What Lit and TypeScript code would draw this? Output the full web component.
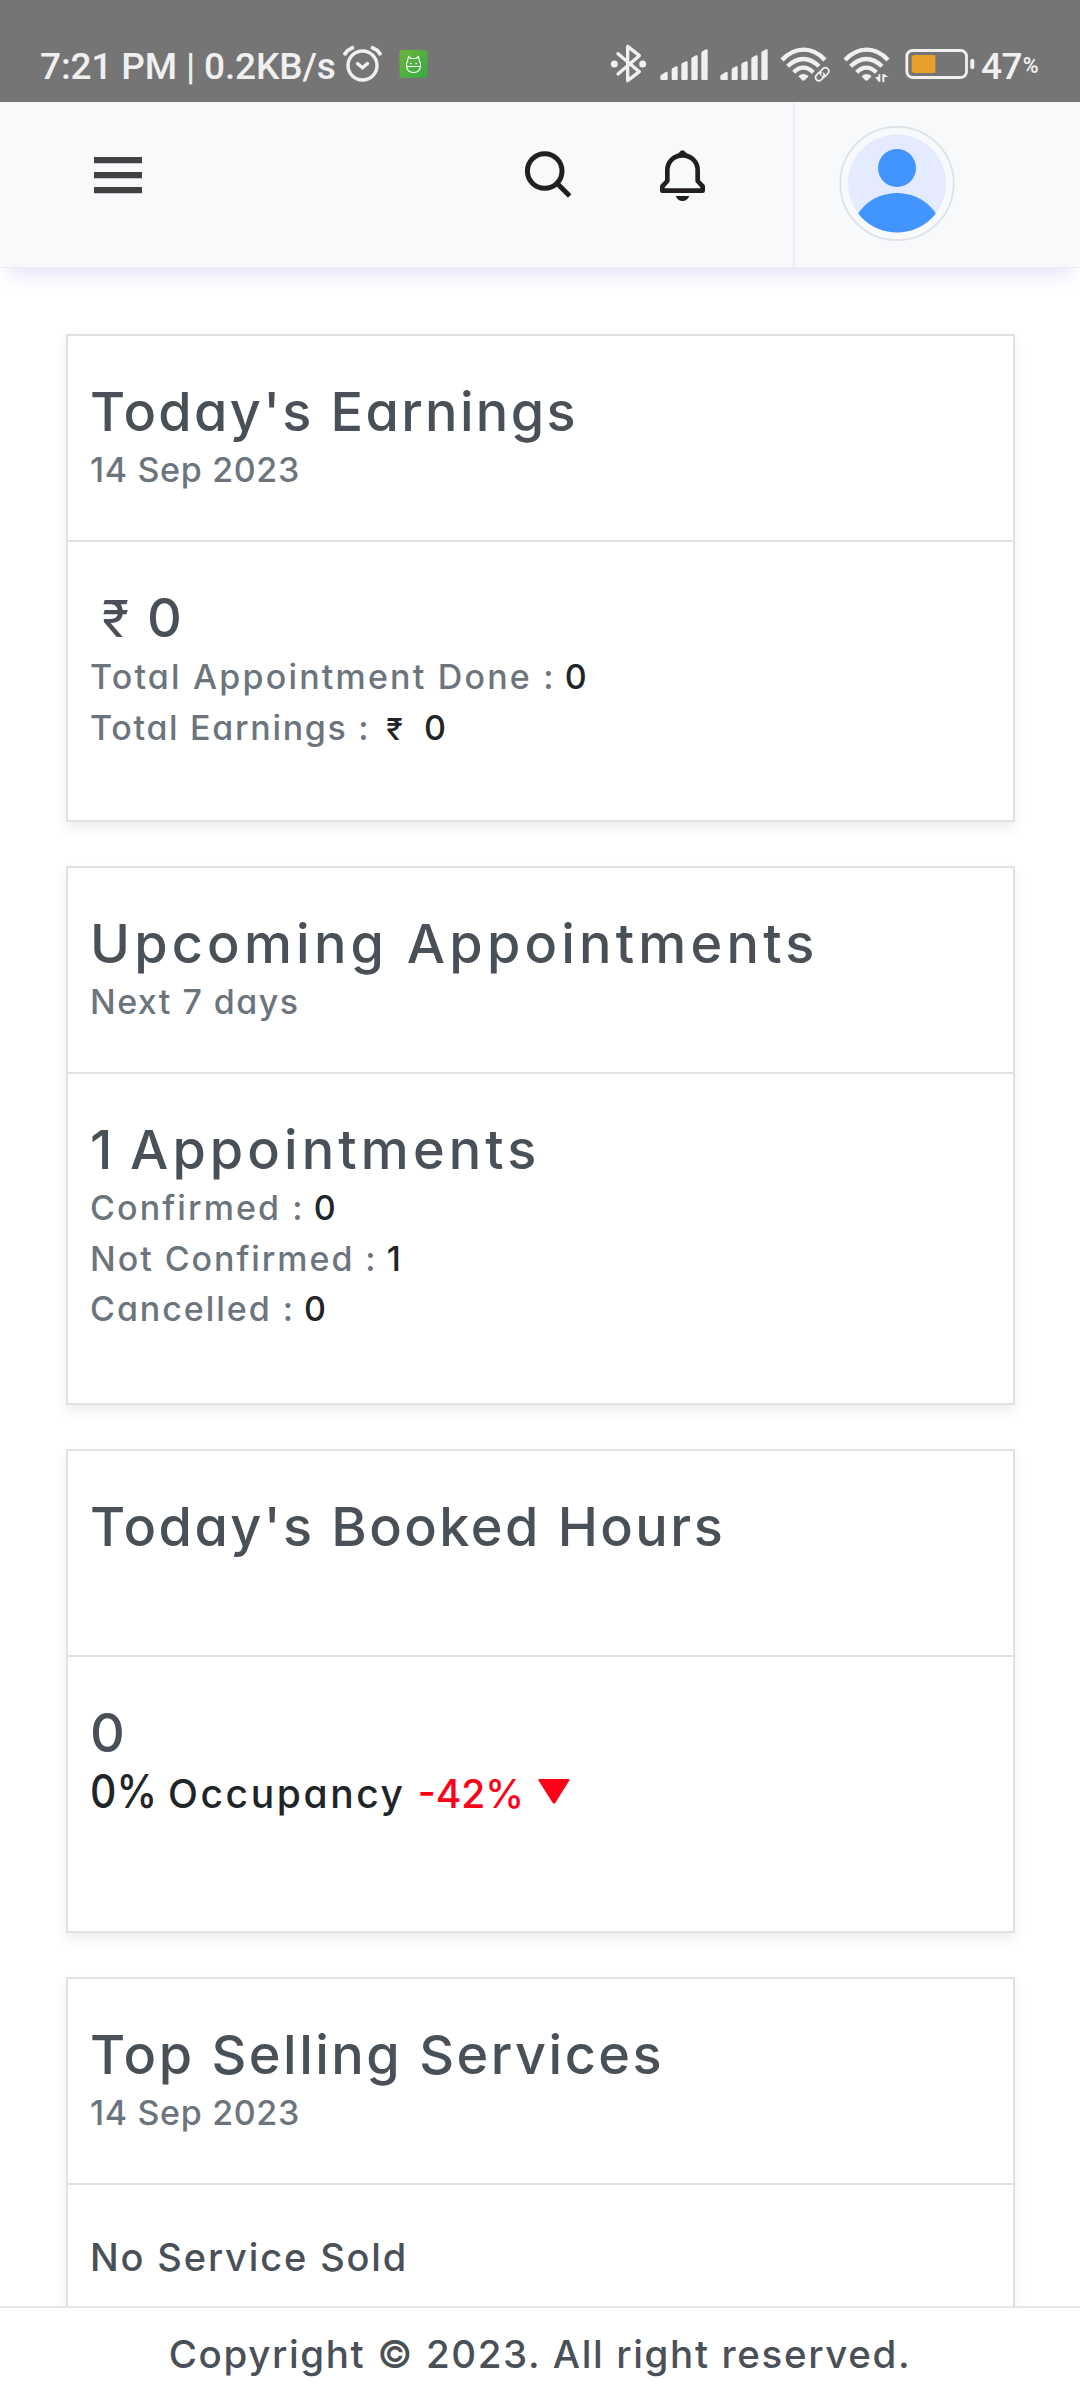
import { LitElement, html, svg, css, nothing } from "lit";
import { customElement, property } from "lit/decorators.js";
import { styleMap } from "lit/directives/style-map.js";

interface Run {
  text: string;
  kind: string;
  track: number;
}

interface Card {
  title: Run;
  note?: Run;
  size: string;
  rows: { kind: string; runs: Run[] }[];
}

const run = (text: string, kind = "", track = 0): Run => ({ text, kind, track });

const CARDS: Card[] = [
  {
    title: run("Today's Earnings", "", 2.35),
    note: run("14 Sep 2023", "", 0.66),
    size: "earnings",
    rows: [
      { kind: "big", runs: [run("₹", "rupee-big"), run("0")] },
      { kind: "line", runs: [run("Total Appointment Done :", "", 2.18), run("0", "value")] },
      { kind: "line", runs: [run("Total Earnings :", "", 1.69), run("₹", "rupee"), run("0", "value amount")] },
    ],
  },
  {
    title: run("Upcoming Appointments", "", 4.2),
    note: run("Next 7 days", "", 1.45),
    size: "upcoming",
    rows: [
      { kind: "big", runs: [run("1 Appointments", "tight", 4.1)] },
      { kind: "line", runs: [run("Confirmed :", "", 2.1), run("0", "value")] },
      { kind: "line", runs: [run("Not Confirmed :", "", 1.94), run("1", "value")] },
      { kind: "line", runs: [run("Cancelled :", "", 1.96), run("0", "value")] },
    ],
  },
  {
    title: run("Today's Booked Hours", "", 2.45),
    size: "hours",
    rows: [
      { kind: "big", runs: [run("0")] },
      { kind: "rate", runs: [run("0%", "percent"), run("Occupancy", "occupancy", 2.6), run("-42%", "drop"), run("", "arrow")] },
    ],
  },
  {
    title: run("Top Selling Services", "", 2.5),
    note: run("14 Sep 2023", "", 0.66),
    size: "services",
    rows: [{ kind: "plain", runs: [run("No Service Sold", "", 1.85)] }],
  },
];

const drawRun = (r: Run) =>
  r.kind === "arrow"
    ? html`<svg class="arrow" width="32" height="25" viewBox="0 0 32 25"><path d="M.5 1.5Q0 0 1.5 0h29Q32 0 31.3 1.5L17.2 24q-1.2 1.5-2.4 0z" fill="#ff0019" /></svg>`
    : html`<span class=${r.kind} style=${styleMap({ letterSpacing: `${r.track}px` })}>${r.text}</span>`;

@customElement("status-bar")
class StatusBar extends LitElement {
  static styles = css`
    :host {
      display: flex;
      box-sizing: border-box;
      height: 102px;
      padding: 30px 0 0 40px;
      background: #757575;
      color: #f0f0f0;
      font: 500 37px/70px Roboto, "Liberation Sans", sans-serif;
      white-space: nowrap;
    }
    svg { display: block; flex: none; fill: #f0f0f0; }
    .time { width: 302px; margin-top: 1.5px; letter-spacing: -0.15px; }
    .pct { font-size: 21.5px; margin: 1px 0 0 1px; font-weight: 600; }
    .level { margin: 1.5px 0 0 6px; letter-spacing: -0.6px; }
    .app { margin-left: 17px; }
    .bt { margin-left: 182px; }
    .sig { margin-left: 13px; }
    .sig2 { margin-left: 11px; }
    .wifi { margin-left: 11px; }
    .wifi2 { margin-left: 12px; }
    .bat { margin-left: 11px; }
  `;

  private signal(cls: string) {
    return html`<svg class=${cls} width="49" height="70" viewBox="177 0 147 210">
      <path d="M178 147v-8q0-2 2-4l14-9q6-3 6 2v22h-18q-4 0-4-3zM212 119q0-3 3-5l10-5q5-2 5 3v35q0 3-3 3h-12q-3 0-3-3zM241 104q0-3 3-5l11-5q5-2 5 3v50q0 3-3 3h-13q-3 0-3-3zM271 87q0-3 3-5l11-6q5-2 5 3v68q0 3-3 3h-13q-3 0-3-3zM301 69q0-3 3-5l12-6q4-2 4 3v86q0 3-3 3h-13q-3 0-3-3z" />
    </svg>`;
  }

  private waves(badge: unknown, cls: string) {
    return html`<svg class=${cls} width="51" height="70" viewBox="541 0 153 210">
      <g fill="none" stroke="#f0f0f0" stroke-width="13">
        <path d="M547 90Q576 59 612 59T676 90" />
        <path d="M564 109Q586 87 611 87T658 109" />
        <path d="M582 127Q596 113 611 113T641 127" />
      </g>
      <path d="M596 139q15-14 31 0l-11 11q-5 4-9 0z" />
      ${badge}
    </svg>`;
  }

  render() {
    const link = svg`<g fill="none" stroke="#757575" stroke-width="12"><path d="M652 150l32-34" /></g>
      <g fill="none" stroke="#f0f0f0" stroke-width="5" stroke-linecap="round">
        <path d="M663 134q-5-6 1-12l6-6q7-6 14 0t1 14l-7 8q-5 4-10 1" />
        <path d="M672 130q5 7-1 13l-6 6q-7 7-14 1t-1-14l6-7q4-4 9-2" />
      </g>`;
    const arrows = svg`<path d="M636 131h12v2h6v26h-18z" fill="#757575" />
      <path d="M647 133h6v23q-3 1-5-1l-11-14h10zM659 157h6v-16h12l-13-9q-3-1-5 1z" />`;
    return html`
      <span class="time">7:21 PM | 0.2KB/s</span>
      <svg class="alarm" width="40" height="70" viewBox="0 0 40 70">
        <g fill="none" stroke="#f0f0f0" stroke-linecap="round">
          <circle cx="20.500" cy="35.500" r="14.500" stroke-width="3.400" />
          <path d="M15.500 33.500l5 4.200 5-4.200" stroke-width="3.400" />
          <path d="M3 23.800Q6 19.500 10.500 17.800M38 23.800Q35 19.500 30.500 17.800" stroke-width="3.800" />
        </g>
      </svg>
      <svg class="app" width="29" height="70" viewBox="0 0 29 70">
        <defs><linearGradient id="g" x1="0" y1="0" x2="1" y2="1"><stop offset="0" stop-color="#6bb43c" /><stop offset="1" stop-color="#35aa43" /></linearGradient></defs>
        <rect x="0.500" y="20" width="28" height="28" rx="2.500" fill="url(#g)" />
        <g fill="none" stroke="#fff" stroke-width="1.100">
          <path d="M8.500 31.500l1-5 2.500 2h5l2.500-2 1 5q1 1 1 3.500 0 7.500-7 7.500t-7-7.500q0-2.500 1-3.500zM7.500 36.500h14" />
          <path d="M11 33.500h1.500M16.500 33.500h1.500" stroke-width="1.500" />
        </g>
      </svg>
      <svg class="bt" width="37" height="70" viewBox="29 0 111 210">
        <path d="M53 71l64 54-35 27V49l35 28-64 55" fill="none" stroke="#f0f0f0" stroke-width="10" stroke-linejoin="round" stroke-linecap="round" />
        <circle cx="42" cy="102" r="10.500" /><circle cx="127" cy="102" r="10.500" />
      </svg>
      ${this.signal("sig")} ${this.signal("sig2")} ${this.waves(link, "wifi")} ${this.waves(arrows, "wifi2")}
      <svg class="bat" width="70" height="70" viewBox="197 0 210 210">
        <rect x="202.500" y="61.500" width="179" height="81" rx="17" fill="none" stroke="#f0f0f0" stroke-width="8.500" />
        <rect x="393" y="87" width="12" height="30" rx="5" />
        <path d="M225 75h63v54h-63q-8 0-8-8V83q0-8 8-8z" fill="#e8a02c" />
      </svg>
      <span class="level">47</span><span class="pct">%</span>
    `;
  }
}

@customElement("top-bar")
class TopBar extends LitElement {
  static styles = css`
    :host {
      display: flex;
      box-sizing: border-box;
      height: 166px;
      background: #f8f9fb;
      border-bottom: 1px solid #ececf4;
      box-shadow: 0 15px 18px -9px rgba(100, 90, 225, 0.18);
    }
    svg { display: block; flex: none; }
    .menu { margin: 54px 0 0 94px; }
    .search { margin: 48px 0 0 382px; }
    .bell { margin: 46px 0 0 84px; }
    .user {
      margin-left: auto;
      width: 287px;
      box-sizing: border-box;
      border-left: 2px solid #eeeff2;
      padding: 24px 0 0 44px;
    }
  `;
  render() {
    return html`
      <svg class="menu" width="48" height="39" viewBox="0 0 48 39" fill="#3f4143">
        <path d="M0 1h48v6.300H0zM0 16h48v6.300H0zM0 31h48v6.300H0z" />
      </svg>
      <svg class="search" width="50" height="50" viewBox="0 0 50 50" fill="none" stroke="#231f20" stroke-width="5">
        <circle cx="20.700" cy="21" r="17.300" /><path d="M33.200 33.500l12.500 12.500" />
      </svg>
      <svg class="bell" width="49.330" height="54.670" viewBox="444 130 148 164" fill="#231f20">
        <path d="M517.500 152c-26 0-45.500 19-45.500 45v32l-15 16v13h121v-13l-15-16v-32c0-26-19.500-45-45.500-45z" fill="none" stroke="#231f20" stroke-width="14" stroke-linejoin="round" />
        <path d="M501 149q5-1 7-6 9-13 19 0 2 5 7 6v8h-33zM497 274h41q-6 15-20.500 15T497 274z" />
      </svg>
      <div class="user">
        <svg width="116" height="116" viewBox="0 0 116 116">
          <defs><clipPath id="c"><circle cx="58" cy="57.500" r="49" /></clipPath></defs>
          <circle cx="58" cy="57.500" r="56.700" fill="none" stroke="#dee2e6" stroke-width="1.800" />
          <g clip-path="url(#c)">
            <rect width="116" height="116" fill="#e4ebff" />
            <circle cx="58" cy="42" r="19" fill="#4294ff" />
            <circle cx="58" cy="114.500" r="47.500" fill="#4294ff" />
          </g>
        </svg>
      </div>
    `;
  }
}

@customElement("stat-card")
class StatCard extends LitElement {
  @property({ attribute: false }) card!: Card;
  static styles = css`
    :host { display: block; flex: none; }
    .card {
      box-sizing: border-box;
      border: 2px solid #dee2e6;
      background: #fff;
      box-shadow: 0 6px 12px rgba(0, 0, 0, 0.075);
      white-space: nowrap;
      font-weight: 500;
    }
    .earnings { height: 488px; }
    .upcoming { height: 539px; }
    .hours { height: 484px; }
    .services { height: 484px; }
    .head {
      box-sizing: border-box;
      height: 206px;
      padding: 46px 22px 0;
      border-bottom: 2px solid #dee2e6;
    }
    .title, .big { font-size: 54px; line-height: 60px; color: #495057; }
    .note { margin-top: 3px; }
    .note, .line { font-size: 34px; line-height: 50.500px; color: #6c757d; }
    .body { padding: 46px 22px 0; }
    .big { margin-bottom: 3px; }
    .big, .line, .rate, .plain { display: flex; align-items: baseline; }
    .tight { word-spacing: -5px; }
    .rupee-big { font-size: 50px; font-weight: 400; margin: 0 18px 0 12px; }
    .value { color: #212529; margin-left: 9px; }
    .rupee { color: #212529; font-size: 30px; margin-left: 16px; }
    .amount { margin-left: 21px; }
    .rate { line-height: 54px; margin-top: -2px; color: #212529; }
    .percent { font-size: 46px; display: inline-block; transform: scaleX(0.890); transform-origin: 0 50%; width: 67px; }
    .occupancy { font-size: 39px; margin-left: 11px; }
    .drop { font-size: 39px; margin-left: 12px; color: #ff0019; }
    .arrow { margin-left: 14px; align-self: flex-start; margin-top: 15px; }
    .plain { font-size: 38px; line-height: 50px; padding-top: 1px; color: #495057; }
  `;
  render() {
    const c = this.card;
    return html`<section class="card ${c.size}">
      <div class="head">
        <div class="title">${drawRun(c.title)}</div>
        ${c.note ? html`<div class="note">${drawRun(c.note)}</div>` : nothing}
      </div>
      <div class="body">${c.rows.map((r) => html`<div class=${r.kind}>${r.runs.map(drawRun)}</div>`)}</div>
    </section>`;
  }
}

@customElement("app-root")
class AppRoot extends LitElement {
  static styles = css`
    :host {
      display: flex;
      flex-direction: column;
      height: 2400px;
      overflow: hidden;
      background: #fff;
      font-family: Inter, "Open Sans", sans-serif;
      font-feature-settings: "cv11" 1;
    }
    status-bar, top-bar, footer { flex: none; }
    main {
      display: flex;
      flex-direction: column;
      gap: 44px;
      flex: 1;
      min-height: 0;
      overflow: hidden;
      padding: 66px 65px 0 66px;
    }
    top-bar { position: relative; }
    footer {
      box-sizing: border-box;
      height: 94px;
      border-top: 2px solid #e4e5e6;
      padding-top: 19px;
      text-align: center;
      font-size: 38.500px;
      line-height: 54px;
      font-weight: 500;
      letter-spacing: 1.630px;
      color: #495057;
      background: #fff;
    }
  `;
  render() {
    return html`
      <status-bar></status-bar>
      <top-bar></top-bar>
      <main>${CARDS.map((c) => html`<stat-card .card=${c}></stat-card>`)}</main>
      <footer>Copyright © 2023. All right reserved.</footer>
    `;
  }
}
